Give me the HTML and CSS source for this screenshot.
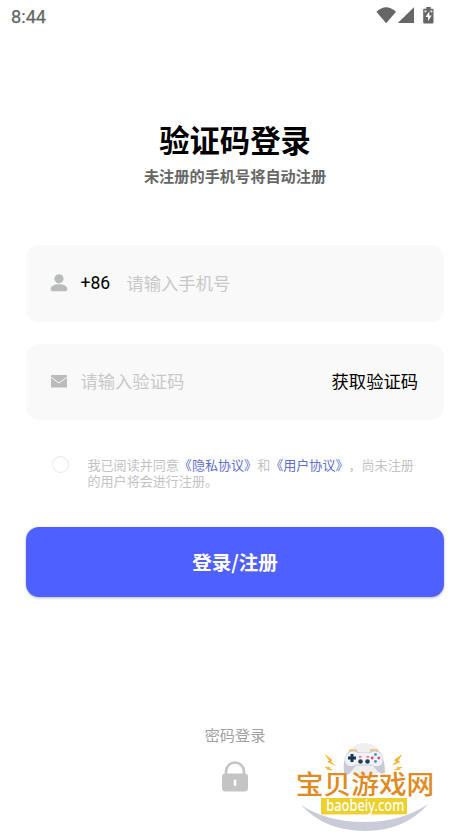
FILE: index.html
```html
<!DOCTYPE html>
<html lang="zh-CN">
<head>
<meta charset="utf-8">
<meta name="viewport" content="width=device-width, initial-scale=1">
<title>验证码登录</title>
<link rel="stylesheet" href="styles.css">
</head>
<body>
<div class="screen">
  <header class="status">
    <span class="clock">8:44</span>
    <svg class="status-icons" width="60" height="20" viewBox="0 0 60 20" fill="#666">
      <path d="M0.4 4.8Q10.2-4.5 20 4.8L10.2 16.3Z"/>
      <path d="M38 0.2V16H21.8Z"/>
      <path d="M50.3 0H54.7V1.7H56.6Q57.5 1.7 57.5 2.5V15.5Q57.5 16.6 56.5 16.6H48.3Q47.2 16.6 47.2 15.5V2.5Q47.2 1.7 48 1.7H50.3Z"/>
      <path d="M53.3 4.2L49.5 10H52V14.2L55.6 8.4H53.3Z" fill="#fff"/>
      <path d="M48.6 3.5H50.8V4.5H49.6V5.5H48.6ZM54.2 3.5H56.3V5.5H55.3V4.5H54.2Z" fill="#fff"/>
    </svg>
  </header>
  <main class="main">
    <h1 class="title">验证码登录</h1>
    <p class="subtitle">未注册的手机号将自动注册</p>
    <div class="field phone">
      <svg class="icon" width="18" height="18" viewBox="0 0 18 18" fill="#babbbd"><circle cx="9" cy="4.8" r="4.6"/><path d="M.7 15.3C.7 11.8 4 10.3 9 10.3S17.3 11.8 17.3 15.3C17.3 16.8 16.3 17.3 15 17.3H3C1.7 17.3.7 16.8.7 15.3Z"/></svg>
      <span class="prefix">+86</span>
      <span class="placeholder">请输入手机号</span>
    </div>
    <div class="field code">
      <svg class="icon" width="18" height="18" viewBox="0 0 18 18"><rect x="1" y="3" width="16" height="12.6" rx=".7" fill="#babbbd"/><path d="M1 5.2L9 11L17 5.2" fill="none" stroke="#f9f9f9" stroke-width="1"/></svg>
      <span class="placeholder">请输入验证码</span>
      <span class="get-code">获取验证码</span>
    </div>
    <div class="agreement">
      <span class="radio"></span>
      <p class="terms">我已阅读并同意<span class="link">《隐私协议》</span>和<span class="link">《用户协议》</span>，尚未注册<br>的用户将会进行注册。</p>
    </div>
    <div class="submit">登录/注册</div>
  </main>
  <footer class="footer">
    <span class="password">密码登录</span>
    <svg width="28" height="32" viewBox="0 0 28 32"><path d="M5 14V10.5a9 9 0 0 1 18 0V14" fill="none" stroke="#c4c4c4" stroke-width="2.6"/><rect x="1" y="12.5" width="26" height="18" rx="3.4" fill="#c4c4c4"/><rect x="12.8" y="18.5" width="2.5" height="6.5" rx="1.2" fill="#fff"/></svg>
  </footer>
  <svg class="watermark" width="150" height="96" viewBox="0 0 150 96">
    <circle cx="73.5" cy="21" r="18" fill="#efefef"/>
    <path d="M10 65Q36 82 73 82Q111 82 137 64Q114 91 74 91Q34 91 10 65Z" fill="#c9cbd9"/>
    <g transform="translate(-1 2.5)">
      <path d="M57 10.5L60 8.5H67L69 10H79L81 8.5H88L91 10.5C94 16 95 25 95 29C94 33 89 31 86 27L83 23H66L62 28C59 33 54 34 54 29C53 24 54 16 57 10.5Z" fill="#c9cad8"/>
      <path d="M59 10Q63 8 68 10.5H80Q85 8 89 10C93 12 94 21 90 23C88 24 84 24 82 22H66C63 24 59 24 57 22C53 18 56 12 59 10Z" fill="#f1f1f8"/>
      <path d="M59 8.5L61 7.5H67M80 7.5H86L88 8.5" fill="none" stroke="#ebbd62" stroke-width="1.6"/>
      <path d="M62 11.5V19.5M58 15.5H66" stroke="#15384d" stroke-width="3"/>
      <g fill="#243e52"><circle cx="70.5" cy="19" r="2.3"/><circle cx="77.5" cy="19" r="2.3"/></g>
      <path d="M69 14.3H71.5M76.5 14.3H79" stroke="#de4958" stroke-width="1.2"/>
      <g fill="#389cc5"><circle cx="85.5" cy="12" r="1.4"/><circle cx="85.5" cy="19" r="1.4"/></g>
      <g fill="#e84a5b"><circle cx="82.2" cy="15.5" r="1.4"/><circle cx="88.8" cy="15.5" r="1.4"/></g>
    </g>
    <g fill="#f5b52d" stroke="#f5b52d" stroke-width=".7">
      <path d="M34.5 15L41 20L39.5 21.5L43.5 25L37 22L38.5 20.5Z"/>
      <path d="M34 27.5L39 27.3L38.5 28.5L41 30L36 29.3L36.5 28.2Z"/>
      <path d="M110.5 15L103.5 20L105 21.5L102 25L108.5 22L107 20.5Z"/>
      <path d="M111 27.5L106 27.3L106.5 28.5L103.5 30L109 29.3L108.5 28.2Z"/>
    </g>
    <text class="brand" transform="translate(4.8 54) scale(1 .93)" textLength="138.5">宝贝游戏网</text>
    <rect x="30" y="58" width="86" height="16.4" fill="#edd02c"/>
    <text class="domain" x="35.3" y="70.8" textLength="78" lengthAdjust="spacingAndGlyphs">baobeiy.com</text>
  </svg>
</div>
</body>
</html>
```
FILE: styles.css
```css
* { box-sizing: border-box; }
body { margin: 0; background: #fff; font-family: "Noto Sans CJK SC", sans-serif; }
h1, p { margin: 0; }
svg { display: block; flex: none; }
.screen { position: relative; width: 470px; height: 836px; overflow: hidden; display: flex; flex-direction: column; }
.status { display: flex; justify-content: space-between; align-items: flex-start; height: 32px; padding: 7px 34px 0 11px; color: #666; }
.clock { font: 400 18.2px/20px Roboto, sans-serif; -webkit-text-stroke: .25px #666; }
.main { display: flex; flex-direction: column; padding: 85px 26px 0; }
.title { font-size: 30.3px; line-height: 44px; font-weight: 700; text-align: center; color: #000; }
.subtitle { margin-top: 3px; font-size: 15.2px; line-height: 22px; font-weight: 700; text-align: center; color: #666; }
.field { display: flex; align-items: center; height: 77px; border-radius: 13px; background: #f9f9f9; padding: 0 26px 2px 24px; font-size: 17.3px; line-height: 26px; }
.phone { margin-top: 59px; }
.code { margin-top: 22px; height: 76px; }
.prefix { margin: 0 16px 0 12.5px; width: 30px; font: 400 17.5px/26px Roboto, sans-serif; color: #000; }
.placeholder { color: #c8c8c8; font-weight: 400; }
.code .placeholder { margin-left: 12.5px; }
.get-code { margin-left: auto; color: #000; }
.agreement { display: flex; margin-top: 36px; padding-left: 26px; gap: 18.5px; height: 40px; }
.radio { width: 17px; height: 17px; border: 1px solid #e7e8f7; border-radius: 50%; flex: none; }
.terms { font-size: 13.05px; line-height: 15.5px; color: #c3c3c3; font-weight: 400; white-space: nowrap; padding-top: 1px; text-spacing-trim: space-all; }
.link { color: #5f6fd0; }
.submit { margin-top: 31px; height: 70px; border-radius: 13px; background: #4e60ff; color: #fff; font-size: 19.5px; line-height: 69px; font-weight: 700; text-align: center; box-shadow: 0 1px 3px rgba(0, 0, 0, .28); }
.footer { display: flex; flex-direction: column; align-items: center; margin-top: 126px; }
.password { font-size: 15.2px; line-height: 22px; font-weight: 400; color: #a0a0a0; margin-bottom: 16px; }
.watermark { position: absolute; left: 291px; top: 740px; }
.brand { font-size: 27.7px; font-weight: 500; fill: #e08a22; }
.domain { font: 500 15.5px "Noto Sans", sans-serif; fill: #fff; }
```
